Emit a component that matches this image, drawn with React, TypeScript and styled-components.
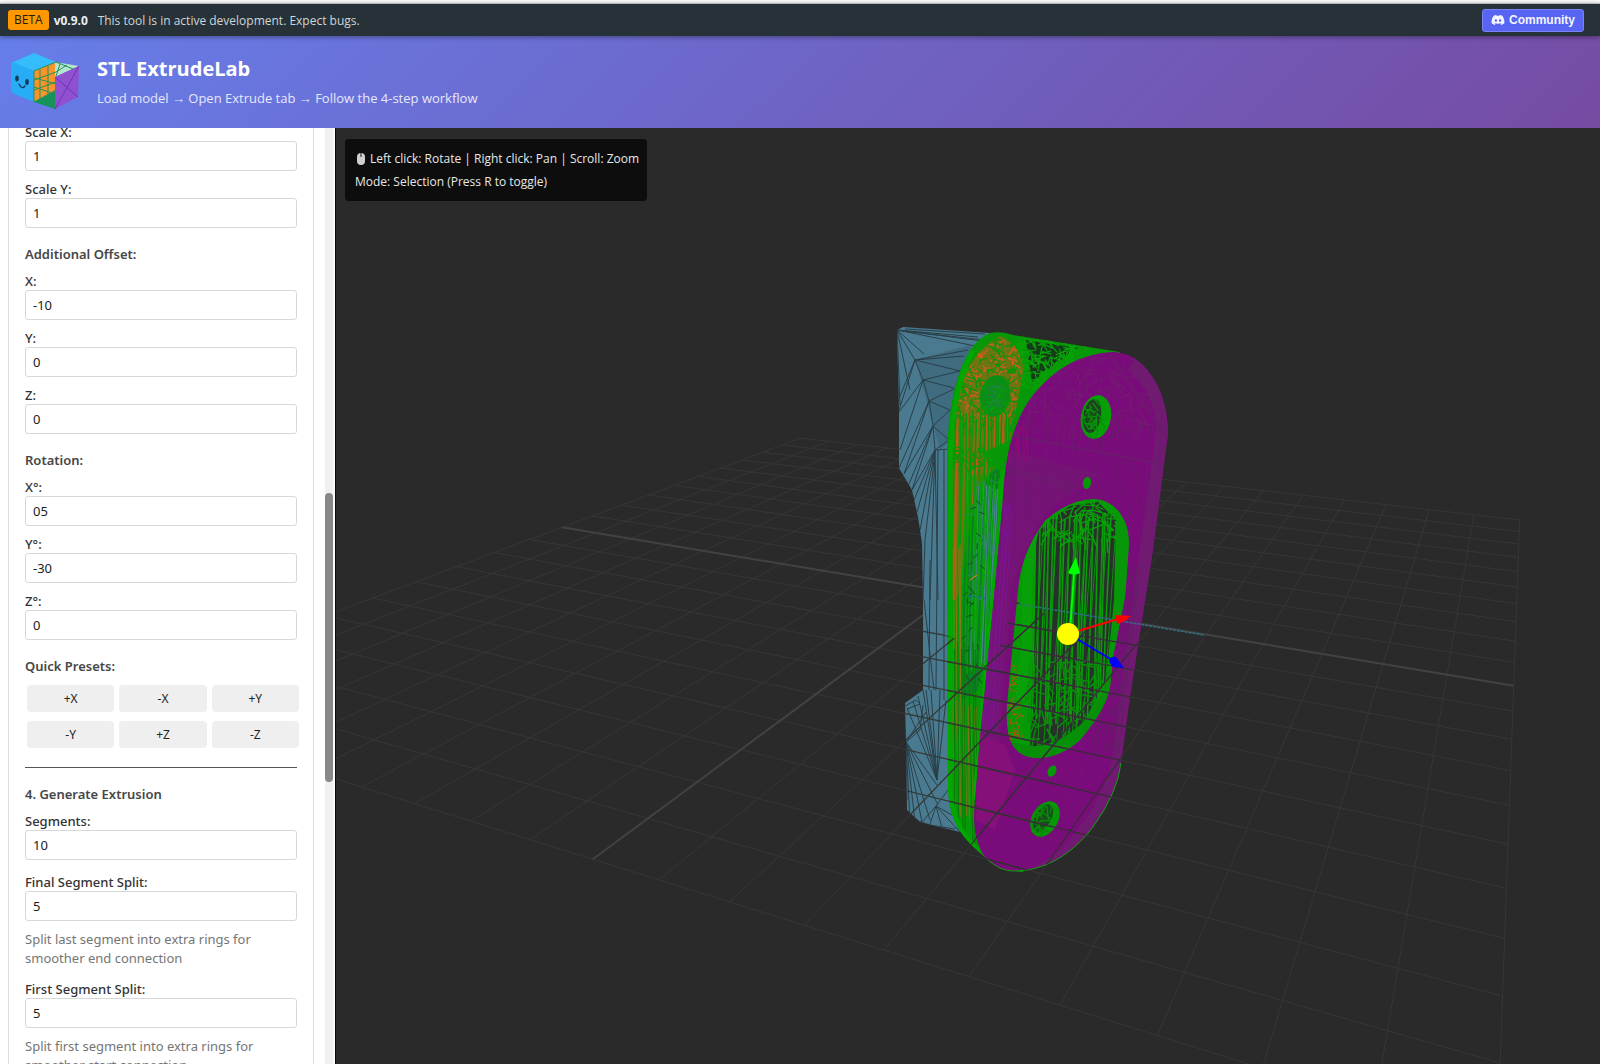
import React, { useId, useLayoutEffect, useRef } from 'react';
import styled, { createGlobalStyle } from 'styled-components';
import { FaDiscord } from 'react-icons/fa';

const sans = '"Open Sans", "Noto Sans", sans-serif';
const panelSans = '"Noto Sans", "Open Sans", sans-serif';

const GlobalStyle = createGlobalStyle`
  *, *::before, *::after { box-sizing: border-box; }
  html, body { margin: 0; padding: 0; overflow: hidden; }
  body { font-family: ${sans}; font-size: 13px; color: #333; background: #fff; }
  button, input { font-family: inherit; }
`;

const Page = styled.div`
  display: flex;
  flex-direction: column;
  height: 100vh;
  border-top: 3px solid #fdfdfd;
`;

const TopBar = styled.div`
  position: relative;
  z-index: 1;
  display: flex;
  align-items: center;
  height: 33px;
  flex: none;
  padding: 0 16px 0 8px;
  border-top: 1px solid #b4b8ba;
  background: #263238;
  box-shadow: 0 1px 5px rgba(0, 0, 0, 0.4);
`;

const Beta = styled.span`
  padding: 0 6px;
  border-radius: 3px;
  background: #ff9800;
  color: #1d1a14;
  font-size: 12px;
  line-height: 20px;
`;

const Version = styled.strong`
  width: 44px;
  margin-left: 5px;
  color: #eceff1;
  font-size: 12px;
  font-weight: 700;
`;

const Notice = styled.span`
  flex: 1;
  color: #cfd5d8;
  font-size: 12px;
`;

const Community = styled.a`
  display: flex;
  align-items: center;
  gap: 4px;
  height: 23px;
  padding: 0 8px;
  border: 1px solid #7983f5;
  border-radius: 3px;
  background: #5865f2;
  color: #f3f4ff;
  font: 700 12px "Liberation Sans", Arial, sans-serif;
  text-decoration: none;
`;

const Header = styled.header`
  display: flex;
  gap: 16px;
  height: 92px;
  flex: none;
  padding: 15px 8px 0 9px;
  background: linear-gradient(135deg, #667eea 0%, #764ba2 100%);
`;

const Logo = styled.svg`
  width: 72px;
  height: 60px;
  flex: none;
`;

const Title = styled.h1`
  margin: 4px 0 0;
  color: #fff;
  font-size: 20px;
  line-height: 28px;
  font-weight: 700;
`;

const Subtitle = styled.p`
  margin: 5px 0 0;
  color: #e6e8fb;
  font-size: 13px;
  line-height: 20px;
`;

const Body = styled.div`
  display: flex;
  flex: 1;
  min-height: 0;
`;

const Sidebar = styled.aside`
  display: flex;
  width: 336px;
  flex: none;
  border-right: 1px solid #0b0b0b;
  font-family: ${panelSans};
`;

const PanelScroll = styled.div`
  flex: 1;
  min-width: 0;
  padding: 8px 11px 8px 8px;
  overflow-y: auto;
  scrollbar-width: none;
`;

const Card = styled.section`
  padding: 16px;
  border: 1px solid #dedede;
  border-radius: 6px;
`;

const Scrollbar = styled.div`
  display: grid;
  grid-template-rows: 365fr 289fr 282fr;
  width: 10px;
  flex: none;
  border-right: 2px solid #fafafa;
  background: #f1f1f1;
`;

const Thumb = styled.div`
  grid-row: 2;
  border-radius: 4px;
  background: #888;
`;

const Heading = styled.h3`
  margin: 16px 0 8px;
  font-size: 13px;
  line-height: 20px;
  font-weight: 600;
  color: #464646;
`;

const Row = styled.div<{ $gap?: number }>`
  display: flex;
  flex-direction: column;
  margin-bottom: ${(p) => p.$gap ?? 9}px;
`;

const Label = styled.label`
  font-size: 13px;
  line-height: 18px;
  font-weight: 500;
`;

const TextBox = styled.input`
  width: 100%;
  height: 30px;
  padding: 0 7px;
  border: 1px solid #d8d8d8;
  border-radius: 3px;
  background: #fff;
  color: #1b1b1b;
  font-size: 13px;
`;

const Help = styled.p`
  margin: 9px 0 12px;
  color: #757575;
  font-size: 13px;
  line-height: 19px;
`;

const Presets = styled.div`
  display: grid;
  grid-template-columns: repeat(3, 1fr);
  gap: 9px 5px;
  margin: 9px -2px 0 2px;
`;

const Preset = styled.button`
  height: 27px;
  padding: 0;
  border: 0;
  border-radius: 4px;
  background: #efefef;
  color: #222;
  font-size: 12px;
`;

const Rule = styled.hr`
  height: 1px;
  margin: 19px 0 16px;
  border: 0;
  background: #555;
`;

const Viewport = styled.main`
  position: relative;
  flex: 1;
  min-width: 0;
  background: #2a2a2a;
`;

const Scene = styled.svg`
  display: block;
  width: 100%;
  height: 100%;
`;

const ControlsHint = styled.div`
  position: absolute;
  top: 11px;
  left: 9px;
  padding: 8px 8px 8px 10px;
  border-radius: 4px;
  background: #0d0d0d;
  color: #e8e8e8;
  font-size: 12px;
  line-height: 23px;
`;

const HintLine = styled.div`
  display: flex;
  align-items: center;
  gap: 3px;
`;

type Pt = [number, number];

/* Floor grid: the unit square is projected onto these four corners. */
const corners: Pt[] = [[800.7, 438.1], [1519.7, 519.9], [1497.3, 1141.6], [92.1, 702.9]];

function projector([a, b, c, d]: Pt[]) {
  const dx1 = b[0] - c[0], dx2 = d[0] - c[0], sx = a[0] - b[0] + c[0] - d[0];
  const dy1 = b[1] - c[1], dy2 = d[1] - c[1], sy = a[1] - b[1] + c[1] - d[1];
  const det = dx1 * dy2 - dx2 * dy1;
  const g = (sx * dy2 - dx2 * sy) / det;
  const h = (dx1 * sy - sx * dy1) / det;
  return (u: number, v: number): Pt => {
    const w = g * u + h * v + 1;
    return [
      ((b[0] - a[0] + g * b[0]) * u + (d[0] - a[0] + h * d[0]) * v + a[0]) / w,
      ((b[1] - a[1] + g * b[1]) * u + (d[1] - a[1] + h * d[1]) * v + a[1]) / w,
    ];
  };
}

const project = projector(corners);
const seg = (p: Pt, q: Pt) =>
  `M${p[0].toFixed(1)} ${p[1].toFixed(1)}L${q[0].toFixed(1)} ${q[1].toFixed(1)}`;
const steps = Array.from({ length: 21 }, (_, i) => i / 20);
const gridLines = steps
  .map((t) => seg(project(t, 0), project(t, 1)) + seg(project(0, t), project(1, t)))
  .join('');
const axisLines = seg(project(0.5, 0), project(0.5, 1)) + seg(project(0, 0.5), project(1, 0.5));

function random(seed: number) {
  let s = seed;
  return () => {
    s = (s * 16807) % 2147483647;
    return s / 2147483647;
  };
}

/* Long, nearly parallel edges running down a wall of the mesh. */
function strands(n: number, x0: number, x1: number, y0: number, y1: number, lean: number, seed: number) {
  const r = random(seed);
  let d = '';
  for (let i = 0; i < n; i++) {
    const x = x0 + ((x1 - x0) * (i + r() * 0.7)) / n;
    d += seg([x, y0 + r() * 10], [x + lean + (r() - 0.5) * 7, y1 - r() * 10]);
  }
  return d;
}

/* Short criss-cross edges of a finely triangulated area. */
function tangle(n: number, x0: number, x1: number, y0: number, y1: number, size: number, seed: number) {
  const r = random(seed);
  let d = '';
  for (let i = 0; i < n; i++) {
    const x = x0 + (x1 - x0) * r(), y = y0 + (y1 - y0) * r(), a = r() * Math.PI;
    d += seg([x, y], [x + Math.cos(a) * size, y + Math.sin(a) * size]);
  }
  return d;
}

function fan(from: Pt, to: Pt[]) {
  return to.map((p) => seg(from, p)).join('');
}

const bodyShape =
  'M897 330L903 327L990 333L1010 400L1000 832L960 832L920 822L907 810L906 742L905 703L923 690L923 600L922 543L918 517L912 490L899 468L899 410Z';
const sleeveShape =
  'M990 333Q1002 331 1013 335L1120 352L1100 500L1060 800L1023 872Q1003 871 987 859Q967 843 958 828Q949 812 948 790L947 460Q947 420 955 387Q967 342 990 333Z';
const slotShape =
  'M1093 499C1112 499 1129 516 1129 543L1125 597L1113 657L1110 687Q1106 709 1080 740Q1060 758 1037 758Q1009 757 1007 724Q1006 710 1008 695L1018 590Q1021 553 1045 521Q1068 500 1093 499Z';
const faceShape =
  'M1113 352C1143 352 1168 388 1168 433L1153 550L1130 697L1121 763Q1118 792 1093 827C1072 854 1046 871 1013 871C985 869 974 846 974 815L980 737L995 587L1003 497Q1006 430 1033 395Q1066 354 1113 352Z';

const overlayClip = 'M850 600L920 625L953 638L997 655L1015 600L1030 610L1140 640L1140 900L850 900Z';

function SceneView() {
  return (
    <Scene viewBox="336 128 1264 936" preserveAspectRatio="xMidYMid slice" role="img" aria-label="3D model preview">
      <defs>
        <clipPath id="body"><path d={bodyShape} /></clipPath>
        <clipPath id="sleeve"><path d={sleeveShape} /></clipPath>
        <clipPath id="slot"><path d={slotShape} /></clipPath>
        <clipPath id="face"><path d={faceShape} /></clipPath>
        <clipPath id="below"><path d={overlayClip} /></clipPath>
        <clipPath id="orange">
          <path d="M1000 336C1017 342 1026 362 1022 378L1010 440L996 466Q972 490 966 530L960 600H951V440Q955 360 1000 336Z" />
        </clipPath>
        <clipPath id="holeTop"><ellipse cx="1096" cy="417" rx="15" ry="22" transform="rotate(10 1096 417)" /></clipPath>
        <clipPath id="holeLow"><ellipse cx="1045" cy="819" rx="13" ry="19" transform="rotate(30 1045 819)" /></clipPath>
      </defs>

      <g fill="none">
        <path d={gridLines} stroke="#363636" />
        <path d={axisLines} stroke="#424242" strokeWidth="2" />
      </g>

      <path d={bodyShape} fill="#4a7a8f" />
      <g clipPath="url(#body)" fill="none" stroke="#2a3f48" strokeWidth="1">
        <path d="M915 360L970 345L1000 400L940 450L925 395Z" fill="#406c80" stroke="none" />
        <path d="M897 330L915 360L923 380L929 401L933 426L935 450L932 480L925 540L923 600" />
        <path d={fan([897, 330], [[990, 342], [990, 349], [978, 337], [924, 354], [910, 390], [900, 405]])} />
        <path d={fan([915, 360], [[899, 410], [899, 398], [968, 350], [964, 356], [960, 371]])} />
        <path d={fan([923, 380], [[899, 412], [900, 450], [960, 371], [954, 388]])} />
        <path d={fan([929, 401], [[899, 468], [904, 474], [954, 389], [950, 410]])} />
        <path d={fan([933, 426], [[904, 474], [909, 484], [912, 490], [950, 410], [949, 440]])} />
        <path d={fan([935, 450], [[912, 490], [914, 500], [917, 512], [920, 530], [949, 440], [949, 449], [930, 600], [938, 600]])} />
        <path d="M902 331L985 340M905 329L985 334M938 450L936 690M944 450L944 700M930 560L929 690M924 600L934 690" />
        <path d={fan([937, 780], [[923, 690], [918, 696], [913, 701], [907, 708], [926, 690], [931, 690], [940, 690], [946, 700]])} />
        <path d={fan([906, 742], [[910, 822], [915, 822], [922, 822], [930, 820], [938, 805], [937, 785], [907, 800], [926, 712]])} />
        <path d={fan([936, 806], [[922, 822], [930, 824], [942, 828], [952, 815], [948, 790], [960, 832]])} />
        <path d="M905 706L916 700L920 704L907 709M906 742L920 730L923 705M910 818L930 825L955 829" />
      </g>

      <path d={sleeveShape} fill="#069806" />
      <g clipPath="url(#sleeve)" fill="none">
        <path d="M1025 340L1078 348L1052 366L1032 382Z" fill="#163d1a" />
        <path d={tangle(190, 1018, 1080, 336, 388, 10, 19)} stroke="#07a307" strokeWidth="1.2" />
        <g clipPath="url(#orange)">
          <path d="M940 330H1030V480L955 600H940Z" fill="#6f7412" />
          <path d={tangle(190, 950, 1025, 338, 418, 7, 5)} stroke="#c8601a" strokeWidth="1.3" />
          <path d={tangle(230, 950, 1025, 338, 430, 8, 8)} stroke="#07950b" strokeWidth="1.2" />
          <path d={strands(13, 951, 1012, 410, 610, -3, 31)} stroke="#bb5b18" strokeWidth="2" />
          <path d={strands(18, 951, 1015, 410, 610, -3, 44)} stroke="#089708" strokeWidth="1.6" />
          <path d={tangle(60, 948, 990, 446, 466, 8, 24)} stroke="#079807" strokeWidth="1.2" />
        </g>
        <ellipse cx="995" cy="396" rx="15" ry="21" fill="#0a8f14" transform="rotate(10 995 396)" />
        <path d={tangle(22, 988, 1000, 384, 404, 7, 12)} stroke="#267d55" />
        <path d={tangle(26, 982, 1004, 380, 412, 7, 13)} stroke="#07a007" />
        <path d="M985 452L1010 440L1006 470L990 466Z" fill="#069806" />
        <path d="M995 469C976 490 968 528 964 570L961 700L978 690L1001 560V471Z" fill="#0c7f22" />
        <path d={strands(11, 976, 1002, 480, 670, -8, 62)} stroke="#4b8596" strokeWidth="1.4" />
        <path d={tangle(48, 974, 998, 480, 600, 8, 91)} stroke="#36798a" />
        <path d={strands(14, 962, 1003, 470, 680, -8, 73)} stroke="#06a106" strokeWidth="1.4" />
        <path d={tangle(24, 966, 980, 500, 680, 6, 15)} stroke="#194a20" />
        <path d={strands(5, 950, 962, 540, 730, 0, 54)} stroke="#8e761b" />
        <path d={strands(9, 952, 978, 700, 820, 3, 14)} stroke="#807319" />
        <path d={strands(8, 950, 978, 640, 850, 2, 27)} stroke="#047b08" />
        <path d="M973 350C957 380 950 420 950 470V790Q952 825 975 848" stroke="#00a800" strokeWidth="5" />
        <path d="M1006 470L998 560L982 740L976 800" stroke="#00a800" strokeWidth="8" />
      </g>

      <path d={faceShape} fill="#7a0b7a" />
      <g clipPath="url(#face)" fill="none">
        <path d="M1128 370C1150 390 1158 410 1155 440L1130 620L1112 760Q1100 810 1060 850L1030 871L1130 850L1180 430L1140 350Z" fill="#701a72" />
        <path d="M1009 450L1100 474L1070 495Q1035 510 1012 590L1000 740L975 800L995 587Z" fill="#761377" />
        <path d="M978 733L1005 745L1015 770L995 830L976 820Z" fill="#86107a" />
        <path d={tangle(150, 1020, 1160, 358, 430, 15, 33)} stroke="#71246f" opacity="0.65" />
        <path d={strands(20, 1010, 1165, 410, 520, -5, 70)} stroke="#6d1a6f" />
        <path d={strands(6, 1011, 1028, 420, 465, 0, 20)} stroke="#930b79" />
        <path d={strands(8, 998, 1014, 500, 735, -18, 37)} stroke="#7b1690" />
        <path d={strands(10, 1112, 1142, 560, 760, -22, 59)} stroke="#671d69" />
        <path d="M1008 468L1080 488M1011 472L1070 490M1010 435L1165 465M1100 340L1168 440" stroke="#6d1a6f" strokeWidth="2" />
        <path d={tangle(70, 980, 1110, 760, 865, 18, 38)} stroke="#712071" opacity="0.5" />
      </g>
      <path d="M987 859Q1000 871 1013 871C1046 871 1072 854 1093 827Q1118 792 1121 763" fill="none" stroke="#0ca00c" />

      <path d={slotShape} fill="#069a06" />
      <g clipPath="url(#slot)" fill="none">
        <path d="M1050 520L1070 506L1098 502L1116 520L1114 600L1106 680L1084 722L1050 750L1030 746L1033 660L1036 534Z" fill="#27302a" />
        <path d={strands(19, 1036, 1113, 510, 725, -6, 17)} stroke="#07a007" strokeWidth="1.5" />
        <path d={strands(13, 1044, 1120, 510, 750, -16, 83)} stroke="#0a900a" />
        <path d={tangle(70, 1046, 1114, 498, 540, 15, 64)} stroke="#07a007" strokeWidth="1.3" />
        <path d={tangle(120, 1026, 1104, 658, 752, 14, 81)} stroke="#078f07" strokeWidth="1.4" />
        <path d={tangle(45, 1010, 1021, 665, 738, 6, 58)} stroke="#a65a13" />
        <path d="M1008 745Q1045 765 1086 728Q1108 705 1114 670" stroke="#078f07" strokeWidth="12" />
        <path d="M1120 520Q1129 560 1116 650" stroke="#08960a" strokeWidth="11" />
        <path d="M1034 530Q1025 560 1027 640L1020 700" stroke="#08a008" strokeWidth="10" />
      </g>

      <g fill="none">
        <ellipse cx="1096" cy="417" rx="15" ry="22" fill="#06a006" transform="rotate(10 1096 417)" />
        <ellipse cx="1092" cy="416" rx="9" ry="17" fill="#1c4420" transform="rotate(10 1092 416)" />
        <g clipPath="url(#holeTop)"><path d={tangle(38, 1078, 1100, 396, 435, 10, 39)} stroke="#079207" strokeWidth="1.3" /></g>
        <ellipse cx="1045" cy="819" rx="13" ry="19" fill="#069806" transform="rotate(30 1045 819)" />
        <ellipse cx="1043" cy="818" rx="8" ry="15" fill="#17501a" transform="rotate(30 1043 818)" />
        <g clipPath="url(#holeLow)"><path d={tangle(40, 1030, 1052, 802, 835, 9, 49)} stroke="#078d07" strokeWidth="1.3" /></g>
        <ellipse cx="1087" cy="483" rx="4" ry="6" fill="#069806" transform="rotate(10 1087 483)" />
        <ellipse cx="1052" cy="771" rx="4" ry="6" fill="#069806" transform="rotate(28 1052 771)" />
      </g>

      <g clipPath="url(#below)">
        <g clipPath="url(#body)"><path d={gridLines} fill="none" stroke="#333a38" strokeWidth="1.3" /></g>
        <g clipPath="url(#sleeve)"><path d={gridLines} fill="none" stroke="#333a2e" strokeWidth="1.3" /></g>
        <g clipPath="url(#face)"><path d={gridLines} fill="none" stroke="#3b2a3b" strokeWidth="1.3" /></g>
      </g>

      <path d="M1019 604L1204 635" stroke="#2f7185" strokeWidth="1.5" strokeDasharray="3 1" />
      <path d="M968 596L987 598" stroke="#1f6c9c" strokeWidth="1.5" strokeDasharray="3 2" />
      <path d="M970 580L977 575" stroke="#b18a12" strokeWidth="1.5" />

      <path d="M1070 632L1074 573" stroke="#00ff00" strokeWidth="2" />
      <path d="M1076 557L1080 573Q1074 576 1068 573Z" fill="#00ff00" />
      <path d="M1078 631L1118 619" stroke="#ff0000" strokeWidth="2" />
      <path d="M1115 615L1131 616L1125 621L1117 624Z" fill="#ff0000" />
      <path d="M1077 639L1112 660" stroke="#0000ff" strokeWidth="2" />
      <path d="M1109 662Q1109 656 1116 657L1124 668L1113 667Z" fill="#0000ff" />
      <circle cx="1068" cy="634" r="11" fill="#ffff00" />
    </Scene>
  );
}

function LogoMark() {
  return (
    <Logo viewBox="9 51 72 60" aria-hidden="true">
      <path d="M11 63L34 53L56 62L34 71Z" fill="#35bdfb" />
      <path d="M11 63Q11 61 13 62L34 71V102L14 94Q11 92 11 90Z" fill="#27acf5" />
      <path d="M34 71L56 62V98L34 102Z" fill="#f8952a" />
      <path d="M55 62L79 66L55 77Z" fill="#b5e6cc" />
      <path d="M34 102L55 91V109Z" fill="#16935b" />
      <path d="M34 71L56 62M34 80L56 72M34 90L56 82M40 69V100M48 66V95M34 71V102M35 78L56 84M34 87L55 94M34 102L56 90M56 62L73 69M60 64L56 76M67 65L56 72" fill="none" stroke="#24905e" strokeWidth="1" />
      <path d="M55 77L79 66L78 97L55 109Z" fill="#9050d0" />
      <path d="M55 77L78 97M79 66L55 109" fill="none" stroke="#6837b2" />
      <ellipse cx="17" cy="78.5" rx="1.8" ry="3" fill="#123b58" />
      <ellipse cx="27" cy="82" rx="1.8" ry="3" fill="#123b58" />
      <path d="M19 84Q22 90 25 86" fill="none" stroke="#123b58" strokeWidth="1.3" strokeLinecap="round" />
    </Logo>
  );
}

function MouseIcon() {
  return (
    <svg width="12" height="14" viewBox="0 0 12 14" aria-hidden="true">
      <path d="M2 5Q2 1 6 1Q10 1 10 5V9Q10 13 6 13Q2 13 2 9Z" fill="#cfcfcf" />
      <path d="M6 1V5" stroke="#555" strokeWidth="1.5" />
    </svg>
  );
}

function Field({ label, value, gap }: { label: string; value: string; gap?: number }) {
  const id = useId();
  return (
    <Row $gap={gap}>
      <Label htmlFor={id}>{label}</Label>
      <TextBox id={id} type="text" inputMode="decimal" defaultValue={value} />
    </Row>
  );
}

function ExtrudePanel() {
  const scroller = useRef<HTMLDivElement>(null);
  useLayoutEffect(() => {
    if (scroller.current) scroller.current.scrollTop = 30;
  }, []);
  return (
    <Sidebar>
      <PanelScroll ref={scroller}>
        <Card>
          <Field label="Scale X:" value="1" />
          <Field label="Scale Y:" value="1" />
          <Heading>Additional Offset:</Heading>
          <Field label="X:" value="-10" />
          <Field label="Y:" value="0" />
          <Field label="Z:" value="0" />
          <Heading>Rotation:</Heading>
          <Field label="X°:" value="05" />
          <Field label="Y°:" value="-30" />
          <Field label="Z°:" value="0" />
          <Heading>Quick Presets:</Heading>
          <Presets>
            {['+X', '-X', '+Y', '-Y', '+Z', '-Z'].map((p) => (
              <Preset key={p} type="button">{p}</Preset>
            ))}
          </Presets>
          <Rule />
          <Heading>4. Generate Extrusion</Heading>
          <Field label="Segments:" value="10" gap={13} />
          <Field label="Final Segment Split:" value="5" />
          <Help>Split last segment into extra rings for smoother end connection</Help>
          <Field label="First Segment Split:" value="5" />
          <Help>Split first segment into extra rings for smoother start connection</Help>
        </Card>
      </PanelScroll>
      <Scrollbar aria-hidden="true"><Thumb /></Scrollbar>
    </Sidebar>
  );
}

export default function App() {
  return (
    <Page>
      <GlobalStyle />
      <TopBar>
        <Beta>BETA</Beta>
        <Version>v0.9.0</Version>
        <Notice>This tool is in active development. Expect bugs.</Notice>
        <Community href="#community"><FaDiscord size={14} />Community</Community>
      </TopBar>
      <Header>
        <LogoMark />
        <div>
          <Title>STL ExtrudeLab</Title>
          <Subtitle>Load model → Open Extrude tab → Follow the 4-step workflow</Subtitle>
        </div>
      </Header>
      <Body>
        <ExtrudePanel />
        <Viewport>
          <SceneView />
          <ControlsHint>
            <HintLine><MouseIcon />Left click: Rotate | Right click: Pan | Scroll: Zoom</HintLine>
            <HintLine>Mode: Selection (Press R to toggle)</HintLine>
          </ControlsHint>
        </Viewport>
      </Body>
    </Page>
  );
}
